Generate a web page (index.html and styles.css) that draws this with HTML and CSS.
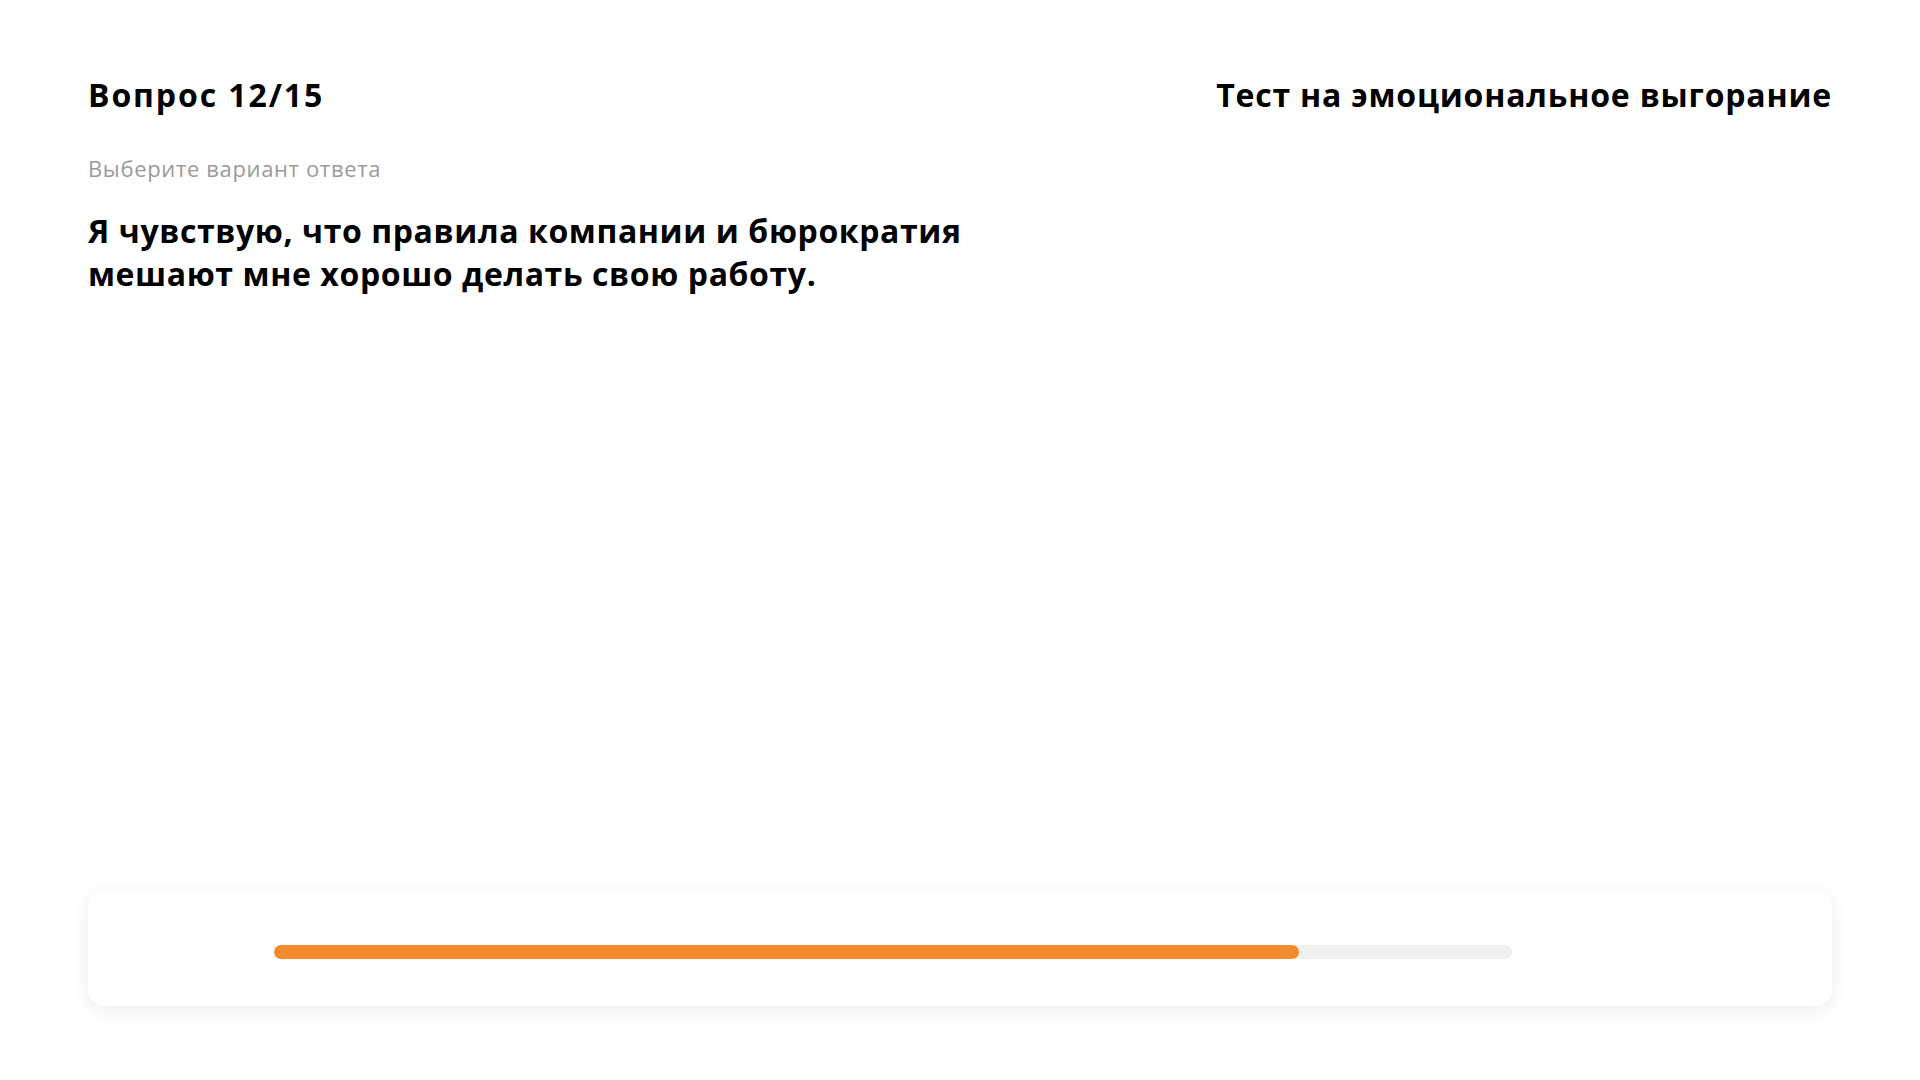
FILE: index.html
```html
<!DOCTYPE html>
<html lang="ru">
<head>
<meta charset="utf-8">
<title>Тест на эмоциональное выгорание</title>
<link rel="stylesheet" href="styles.css">
</head>
<body>
<div class="page">
  <header class="header">
    <h1 class="counter">Вопрос 12/15</h1>
    <h2 class="test-title">Тест на эмоциональное выгорание</h2>
  </header>
  <main class="question">
    <p class="hint">Выберите вариант ответа</p>
    <p class="question-text">Я чувствую, что правила компании и бюрократия мешают мне хорошо делать свою работу.</p>
  </main>
  <footer class="progress-card">
    <div class="track">
      <div class="fill" style="width: 1025px"></div>
    </div>
  </footer>
</div>
</body>
</html>
```

FILE: styles.css
```css
* { box-sizing: border-box; }
html, body { margin: 0; padding: 0; background: #ffffff; }
body {
  font-family: "Open Sans", "Noto Sans", sans-serif;
  color: #000;
}
.page {
  height: 100vh;
  display: flex;
  flex-direction: column;
  padding: 73px 88px 74px;
}
.header {
  display: flex;
  justify-content: space-between;
  align-items: flex-start;
}
.counter, .test-title {
  margin: 0;
  font-size: 32px;
  line-height: 44px;
  font-weight: 700;
}
.counter { letter-spacing: 1.9px; }
.test-title { letter-spacing: 0.8px; }
.question { flex: 1; }
.hint {
  margin: 36px 0 0;
  font-size: 22px;
  line-height: 30px;
  color: #9a9a9a;
  letter-spacing: 0.65px;
}
.question-text {
  margin: 26px 0 0;
  font-size: 32px;
  line-height: 43px;
  font-weight: 700;
  letter-spacing: 0.6px;
  max-width: 980px;
}
.progress-card {
  height: 115px;
  background: #fff;
  border-radius: 16px;
  box-shadow: 0 4px 18px rgba(0, 0, 0, 0.08);
  display: flex;
  align-items: center;
  padding: 7px 0 0 186px;
}
.track {
  width: 1238px;
  height: 14px;
  border-radius: 7px;
  background: #efefef;
}
.fill {
  height: 100%;
  border-radius: 7px;
  background: #f38b2c;
}
```
